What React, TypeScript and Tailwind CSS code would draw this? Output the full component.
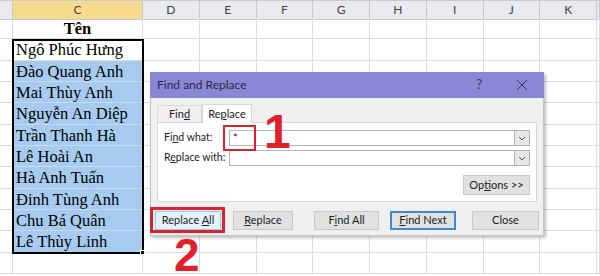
import React from "react";

const COLS = "grid grid-cols-[13px_130px_repeat(8,56.75px)_1fr]";
const letters = ["", "C", "D", "E", "F", "G", "H", "I", "J", "K", ""];

const names = [
  "Ngô Phúc Hưng",
  "Đào Quang Anh",
  "Mai Thùy Anh",
  "Nguyễn An Diệp",
  "Trần Thanh Hà",
  "Lê Hoài An",
  "Hà Anh Tuấn",
  "Đinh Tùng Anh",
  "Chu Bá Quân",
  "Lê Thùy Linh",
];

const Chevron: React.FC = () => (
  <svg width="8" height="5" viewBox="0 0 8 5" fill="none">
    <path d="M1 1l3 3 3-3" stroke="#555" strokeWidth="1" />
  </svg>
);

const ComboBox: React.FC<{ value?: string }> = ({ value }) => (
  <div className="flex-1 h-full flex border border-[#b4b4b4] bg-white">
    <div className="flex-1 pl-[3px] text-[11px] leading-[14px] text-[#222]">{value}</div>
    <div className="w-[15px] h-full flex items-center justify-center bg-[#e6e6e6] border-l border-[#b4b4b4]">
      <Chevron />
    </div>
  </div>
);

const Btn: React.FC<{ w: string; className?: string; children: React.ReactNode }> = ({
  w,
  className = "",
  children,
}) => (
  <div
    className={`${w} h-[19px] flex items-center justify-center text-[11px] text-[#222] ${className}`}
  >
    <span className="whitespace-pre">{children}</span>
  </div>
);

const Sheet: React.FC = () => {
  const rows = ["Tên", ...names, ""];

  return (
    <div className="flex flex-col">
      <div className={`${COLS} h-[18px] border-t border-[#c9ccd1]`}>
        {letters.map((l, i) => (
          <div
            key={i}
            className={`flex items-center justify-center border-r border-b border-[#c5c9cf] text-[12px] text-[#444] font-['Lato',sans-serif] ${
              l === "C" ? "bg-[#f8da8c]" : "bg-[#e8eaed]"
            }`}
          >
            {l}
          </div>
        ))}
      </div>

      {rows.map((text, r) => {
        const filled = r >= 2 && r <= 10;
        return (
          <div key={r} className={`${COLS} h-[21.33px]`}>
            {letters.map((l, i) => {
              if (l === "C") {
                return (
                  <div
                    key={i}
                    className={`border-r border-b overflow-hidden whitespace-nowrap font-['Liberation_Serif',serif] text-[16.5px] leading-[22px] text-black ${
                      filled ? "bg-[#a6cbee] border-[#c3daf2]" : "border-[#dadcdd]"
                    } ${r === 0 ? "text-center font-bold" : "pl-[3px]"}`}
                  >
                    {text}
                  </div>
                );
              }
              return <div key={i} className="border-r border-b border-[#dadcdd]" />;
            })}
          </div>
        );
      })}
    </div>
  );
};

const Dialog: React.FC = () => (
  <div className="absolute left-[150px] top-[72px] w-[394px] h-[164px] flex flex-col shadow-[2px_2px_3px_rgba(0,0,0,0.25)] font-['Lato',sans-serif]">
    <div className="h-[26px] bg-[#8b87d7] flex items-center pl-[7px] pr-[16px]">
      <span className="text-[12px] text-[#2a2a3e] flex-1">Find and Replace</span>
      <span className="text-[13px] text-[#3a3a55] mr-[34px]">?</span>
      <svg width="12" height="12" viewBox="0 0 12 12">
        <path d="M1 1l10 10M11 1L1 11" stroke="#3a3a55" strokeWidth="1" />
      </svg>
    </div>

    <div className="flex-1 bg-[#f0f0f0] border-x border-b border-[#c4c4c4] pl-[6px] pt-[6px]">
      <div className="flex items-end h-[18px]">
        <div className="w-[45px] h-[17px] border border-b-0 border-[#d9d9d9] flex items-center justify-center text-[11px] text-[#222]">
          <span>
            Fin<u>d</u>
          </span>
        </div>
        <div className="w-[50px] h-[19px] -mb-px relative z-10 bg-white border border-b-0 border-[#d9d9d9] flex items-center justify-center text-[11px] text-[#222]">
          <span>
            Re<u>p</u>lace
          </span>
        </div>
      </div>

      <div className="w-[380px] h-[80px] bg-white border border-[#d9d9d9] px-[6px] pt-[7px] flex flex-col">
        <div className="flex items-center h-[16px]">
          <span className="w-[65px] whitespace-nowrap text-[10.5px] text-[#222]">
            Fi<u>n</u>d what:
          </span>
          <ComboBox value="*" />
        </div>
        <div className="flex items-center h-[16px] mt-[4px]">
          <span className="w-[65px] whitespace-nowrap text-[10.5px] text-[#222]">
            R<u>e</u>place with:
          </span>
          <ComboBox />
        </div>
        <div className="flex justify-end mt-[9px]">
          <Btn w="w-[67px] h-[20px]" className="bg-[#e1e1e1] border border-[#c8c8c8]">
            Op<u>t</u>ions &gt;&gt;
          </Btn>
        </div>
      </div>

      <div className="flex mt-[9px] -ml-[2px]">
        <Btn w="w-[66px]" className="bg-[#e5f1fb] border border-[#9cc7ee]">
          Replace <u>A</u>ll
        </Btn>
        <Btn w="w-[60px]" className="ml-[12px] bg-[#e1e1e1] border border-[#c8c8c8]">
          <u>R</u>eplace
        </Btn>
        <Btn w="w-[65px]" className="ml-[21px] bg-[#e1e1e1] border border-[#c8c8c8]">
          F<u>i</u>nd All
        </Btn>
        <Btn w="w-[66px]" className="ml-[11px] bg-[#e1e1e1] border-2 border-[#3c8ad4]">
          <u>F</u>ind Next
        </Btn>
        <Btn w="w-[67px]" className="ml-[16px] bg-[#e1e1e1] border border-[#c8c8c8]">
          Close
        </Btn>
      </div>
    </div>
  </div>
);

export default function App() {
  return (
    <div className="relative w-[600px] h-[276px] overflow-hidden bg-white">
      <Sheet />

      {/* selection border around C3:C12 */}
      <div className="absolute left-[12px] top-[39px] w-[132px] h-[215px] border-2 border-black pointer-events-none" />
      <div className="absolute left-[140px] top-[250px] w-[5px] h-[5px] bg-black border border-white" />

      <Dialog />

      {/* annotations */}
      <div className="absolute left-[223px] top-[125px] w-[33px] h-[26px] border-2 border-[#dc2230]" />
      <div className="absolute left-[150px] top-[207px] w-[75px] h-[26px] border-[3px] border-[#dc2230]" />
      <div className="absolute left-[264px] top-[106px] font-['Liberation_Sans',sans-serif] font-bold text-[48px] leading-[52px] text-[#e0202a]">
        1
      </div>
      <div className="absolute left-[174px] top-[235px] font-['Liberation_Sans',sans-serif] font-bold text-[46px] leading-[40px] text-[#e0202a]">
        2
      </div>
    </div>
  );
}
